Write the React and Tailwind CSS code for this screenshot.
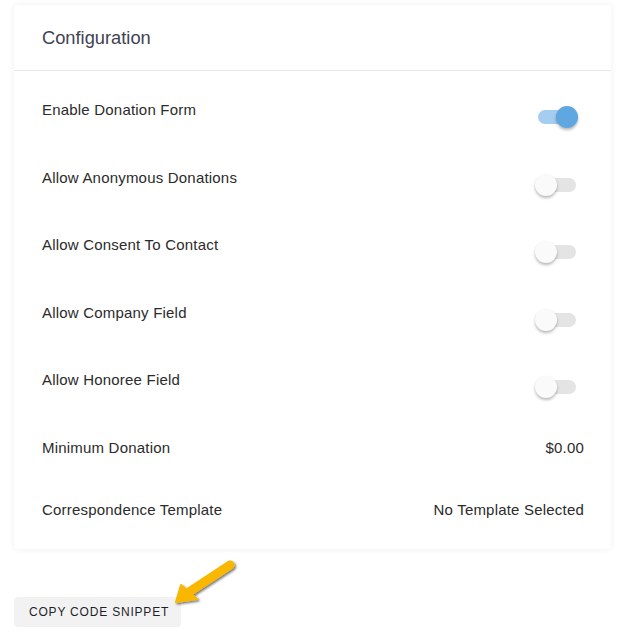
const rows = [
  { label: 'Enable Donation Form', on: true },
  { label: 'Allow Anonymous Donations', on: false },
  { label: 'Allow Consent To Contact', on: false },
  { label: 'Allow Company Field', on: false },
  { label: 'Allow Honoree Field', on: false },
];

const Toggle = ({ on }) => {
  return (
    <div className="relative w-[43px] h-[22px] mr-[6px] mt-[5px]">
      <div className={`absolute left-[3px] right-[2px] top-[4px] h-[14px] rounded-full ${on ? 'bg-[#a5cdef]' : 'bg-[#e4e4e4]'}`} />
      <div
        className={`absolute top-0 w-[22px] h-[22px] rounded-full shadow-[0_2px_3px_rgba(0,0,0,0.28)] ${on ? 'right-0 bg-[#5ea7e1]' : 'left-0 bg-[#fafafa]'}`}
      />
    </div>
  );
};

const App = () => {
  return (
    <div className="relative w-[626px] h-[640px] bg-white font-['Liberation_Sans',Arial,sans-serif] pt-[5px] px-[14px]">
      <div className="w-[597px] bg-white rounded-[3px] shadow-[0_0_6px_rgba(0,0,0,0.07)]">
        <div className="h-[66px] flex items-center px-[28px] border-b border-[#e8e8e8]">
          <h2 className="text-[18.3px] text-[#3f4252]">Configuration</h2>
        </div>
        <div className="pt-[30px] pl-[28px] pr-[27px] text-[15px] tracking-[0.2px] leading-[18px] text-[#2b2b2b]">
          {rows.map((r) => (
            <div key={r.label} className="h-[67.5px] flex justify-between items-start">
              <span>{r.label}</span>
              <Toggle on={r.on} />
            </div>
          ))}
          <div className="h-[62px] flex justify-between items-start">
            <span>Minimum Donation</span>
            <span>$0.00</span>
          </div>
          <div className="h-[48px] flex justify-between items-start">
            <span>Correspondence Template</span>
            <span>No Template Selected</span>
          </div>
        </div>
      </div>

      <button className="mt-[48px] w-[167px] h-[30px] rounded-[4px] bg-[#f2f2f2] text-[12px] tracking-[0.8px] text-[#1f1f2a] text-left pl-[15px]">
        COPY CODE SNIPPET
      </button>

      <svg className="absolute left-[165px] top-[555px]" width="80" height="60" viewBox="0 0 80 60">
        <defs>
          <filter id="sh" x="-30%" y="-30%" width="160%" height="160%">
            <feDropShadow dx="1.5" dy="1.5" stdDeviation="1.2" floodColor="#000" floodOpacity="0.55" />
          </filter>
        </defs>
        <g filter="url(#sh)">
          <line x1="65" y1="10" x2="24" y2="37" stroke="#f9b704" strokeWidth="9" strokeLinecap="round" />
          <polygon points="11,47 16,30 32,44" fill="#f9b704" stroke="#f9b704" strokeWidth="2" strokeLinejoin="round" />
        </g>
      </svg>
    </div>
  );
};

export default App;
